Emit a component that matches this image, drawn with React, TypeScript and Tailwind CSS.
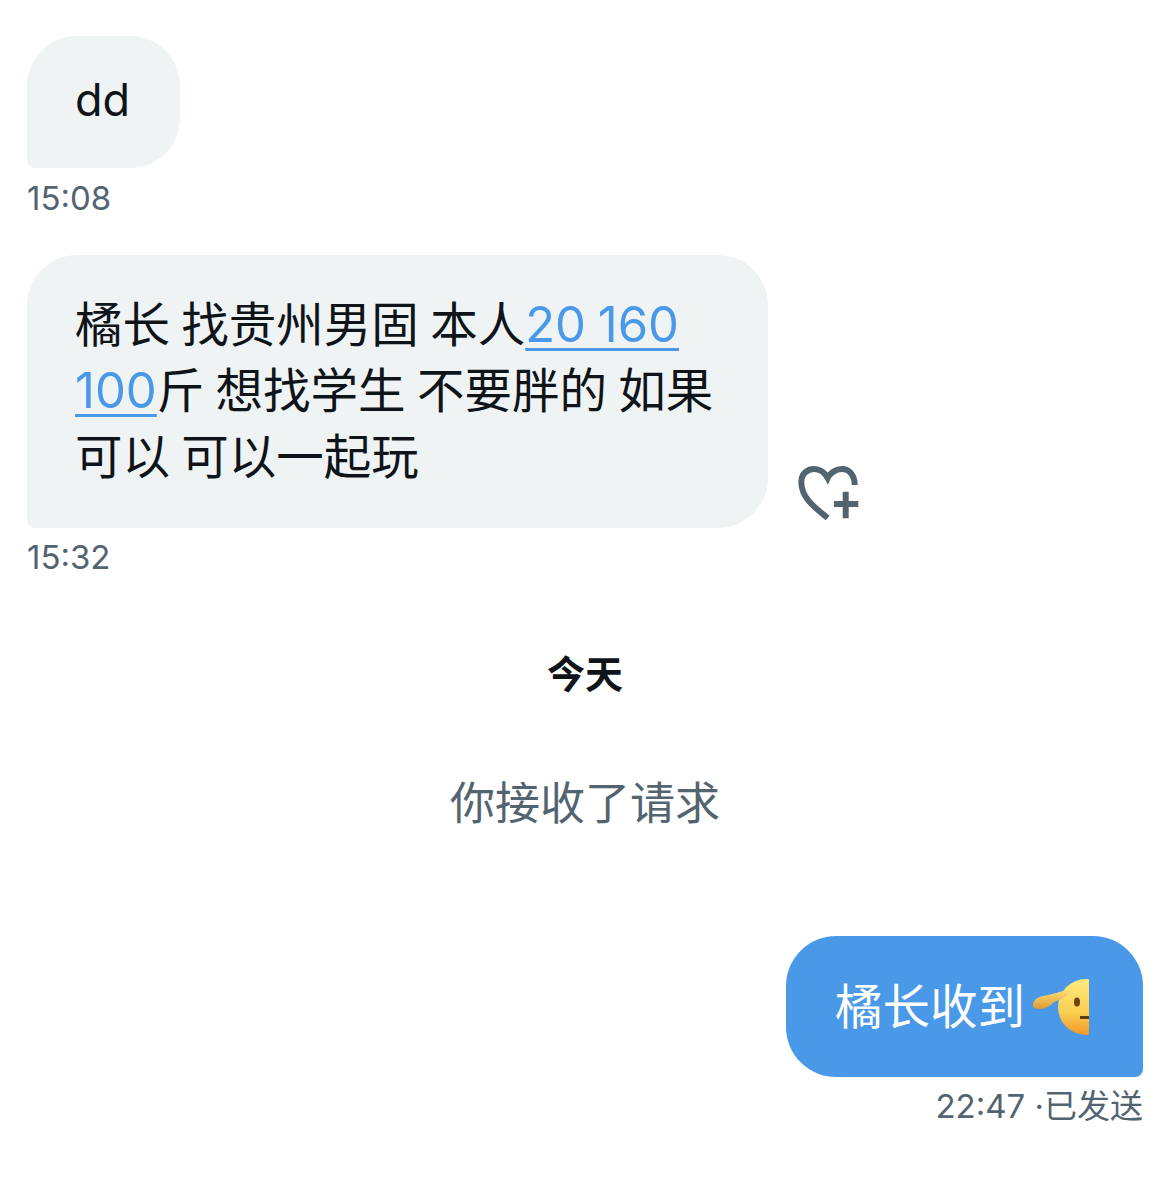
import React from 'react';

const FONT = "font-['Inter','Noto_Sans_CJK_SC',sans-serif]";
const LINK = 'text-[49px] leading-none text-[#4a99e9] underline underline-offset-[6px] decoration-[3px]';

function HeartPlus() {
  return (
    <svg width="64" height="58" viewBox="0 0 64 58" fill="none" className="block">
      <path
        d="M30.700 55 C20 46 4.300 36 4.300 19 C4.300 11 10 6 17 6 C23 6 28 10 30.700 15 C33 10 39 6 45 6 C52 6 57.700 12 57.700 22"
        stroke="#536471"
        strokeWidth="6"
        fill="none"
      />
      <path d="M48.700 28.700 V55.300 M37 41 H61.300" stroke="#536471" strokeWidth="6" />
    </svg>
  );
}

function SaluteEmoji() {
  return (
    <svg width="58" height="56" viewBox="0 0 58 56" className="block">
      <defs>
        <linearGradient id="face" x1="0" y1="0" x2="0" y2="1">
          <stop offset="0" stopColor="#fdea80" />
          <stop offset="0.6" stopColor="#fbcf52" />
          <stop offset="1" stopColor="#f0982b" />
        </linearGradient>
        <linearGradient id="hand" x1="0" y1="0" x2="0" y2="1">
          <stop offset="0" stopColor="#fbdc78" />
          <stop offset="1" stopColor="#dd9a30" />
        </linearGradient>
        <clipPath id="half">
          <rect x="0" y="0" width="57" height="56" />
        </clipPath>
      </defs>
      <g clipPath="url(#half)">
        <circle cx="54" cy="28" r="28" fill="url(#face)" />
        <ellipse cx="45" cy="23" rx="3" ry="4.500" fill="#6b4512" />
        <rect x="48" y="37" width="9" height="3" fill="#5f3d10" />
      </g>
      <path
        d="M1 26 C1 21 6 18 11 17 C18 16 27 13 33 11.500 C36 11 37 14 35 16 C31 20 25 21 21 24 C16 28 12 30 8 30 C4 30 1 29 1 26 Z"
        fill="url(#hand)"
      />
    </svg>
  );
}

export default function App() {
  return (
    <div className={`${FONT} w-[1169px] h-[1188px] bg-white pt-9 pl-[27px] pr-[26px] overflow-hidden flex flex-col`}>
      <div className="w-[153px] pl-[48px] pt-[31px] pb-[35px] text-[45px] leading-[66px] text-[#0f1419] bg-[#eff3f4] rounded-[50px] rounded-bl-lg">
        dd
      </div>
      <div className="mt-[10px] text-[33px] leading-[40px] text-[#536471]">15:08</div>

      <div className="mt-[37px] flex items-end">
        <div className="w-[741px] pl-[48px] pt-[37px] pb-[38px] text-[47.500px] leading-[66px] [word-spacing:-2px] text-[#0f1419] bg-[#eff3f4] rounded-[50px] rounded-bl-lg whitespace-nowrap">
          橘长 找贵州男固 本人<span className={LINK}>20 160</span>
          <br />
          <span className={LINK}>100</span>斤 想找学生 不要胖的 如果
          <br />
          可以 可以一起玩
        </div>
        <div className="ml-[29px] mb-[7px]">
          <HeartPlus />
        </div>
      </div>
      <div className="mt-[9px] text-[33px] leading-[40px] text-[#536471]">15:32</div>

      <div className="mt-[72px] text-center text-[38px] leading-[50px] font-bold text-[#0f1419]">今天</div>
      <div className="mt-[75px] text-center text-[45px] leading-[60px] text-[#536471]">你接收了请求</div>

      <div className="mt-[102px] self-end w-[357px] h-[141px] pl-[49px] flex items-center gap-[7px] text-[47.500px] text-white bg-[#4a99e9] rounded-[50px] rounded-br-lg whitespace-nowrap">
        <span className="leading-[66px]">橘长收到</span>
        <SaluteEmoji />
      </div>
      <div className="mt-[9px] self-end text-[33px] leading-[40px] text-[#536471]">22:47 ·已发送</div>
    </div>
  );
}
